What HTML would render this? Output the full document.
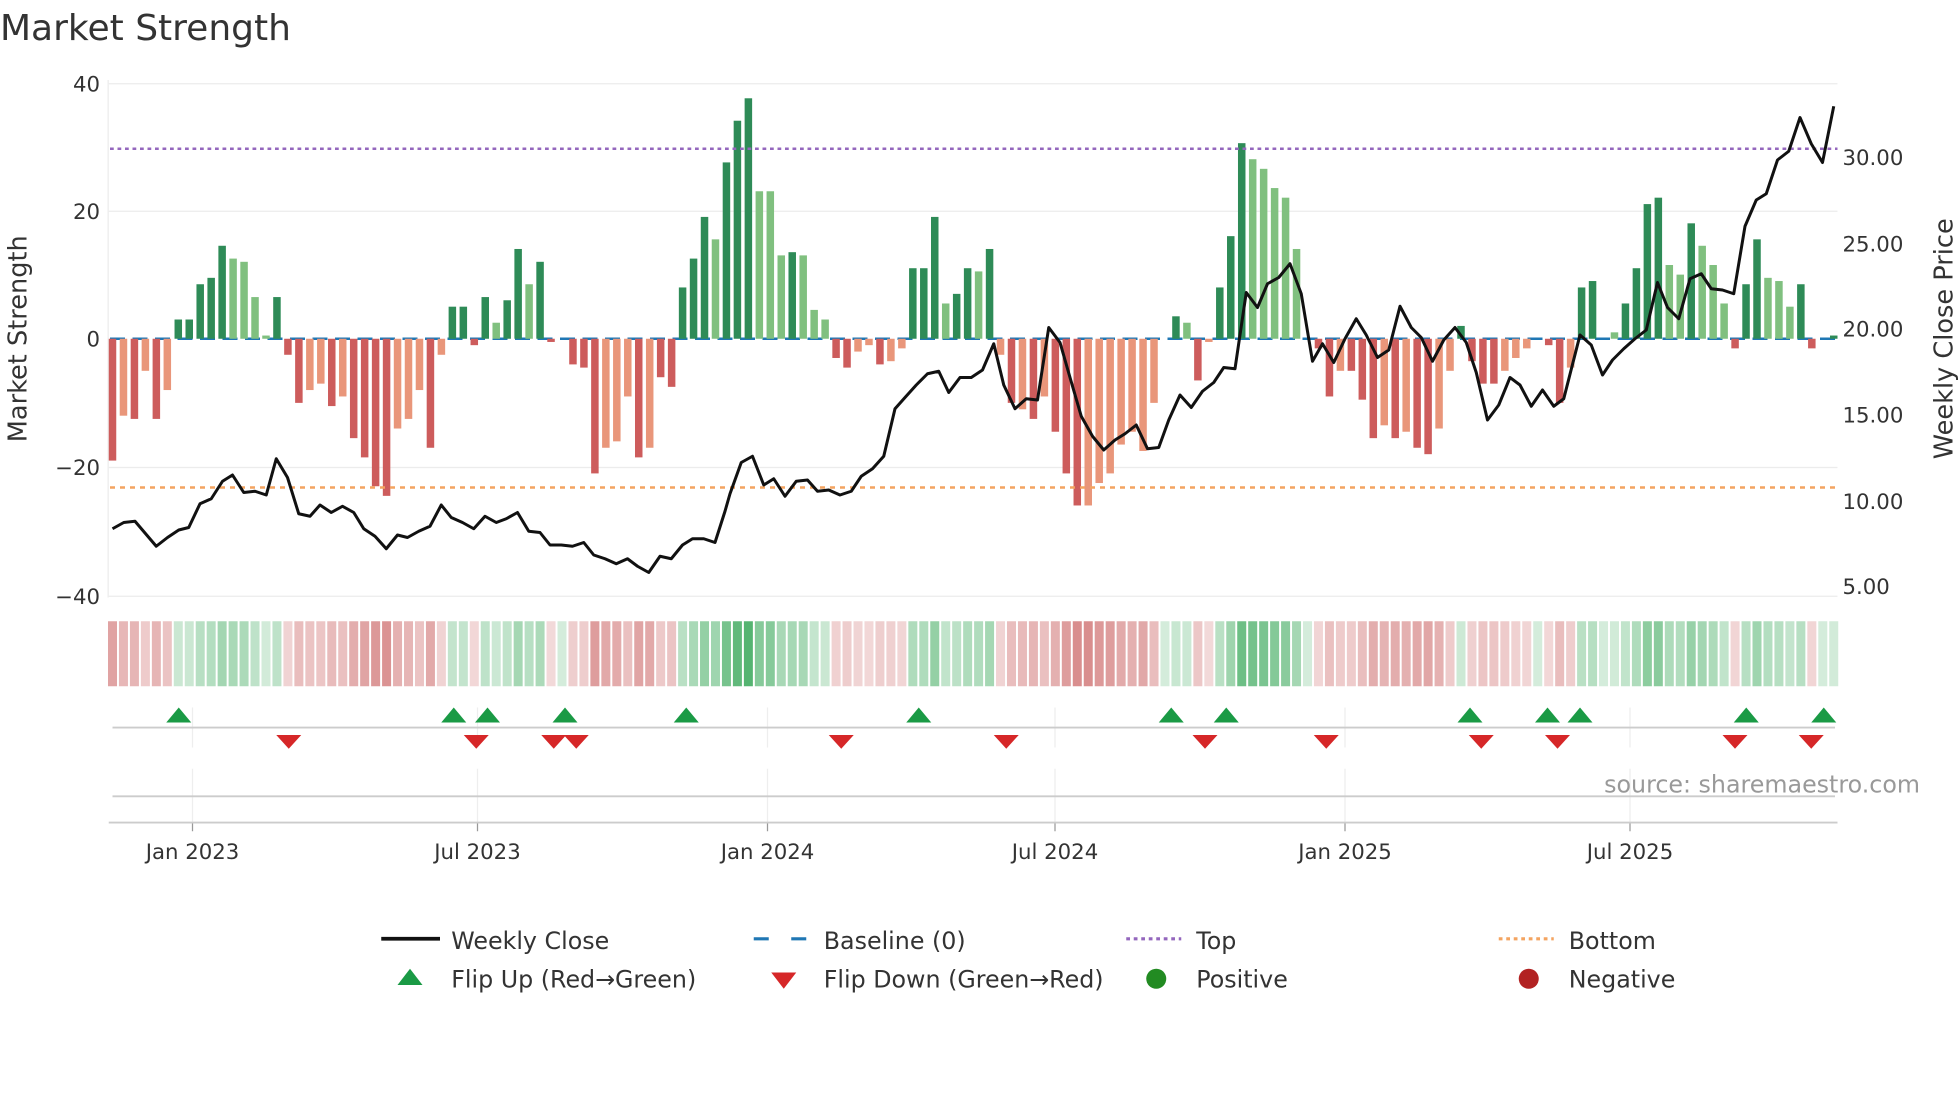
<!DOCTYPE html>
<html><head><meta charset="utf-8">
<style>
html,body{margin:0;padding:0;background:#fff;width:1960px;height:1102px;overflow:hidden}
svg{display:block;font-family:"DejaVu Sans","Liberation Sans",sans-serif}
</style></head><body>
<svg id="s" width="1960" height="1102" viewBox="0 0 1568 881.6" xmlns="http://www.w3.org/2000/svg">
<text x="0" y="32" font-size="28.8" fill="#333">Market Strength</text>
<g stroke="#ececec" stroke-width="1">
<line x1="87" y1="67" x2="1470" y2="67"/><line x1="87" y1="169" x2="1470" y2="169"/>
<line x1="87" y1="374" x2="1470" y2="374"/><line x1="87" y1="477" x2="1470" y2="477"/>
<line x1="86.5" y1="64" x2="86.5" y2="478"/>
</g>
<g font-size="17" fill="#333" text-anchor="end">
<text x="80" y="73">40</text><text x="80" y="175">20</text><text x="80" y="277">0</text>
<text x="80" y="380">−20</text><text x="80" y="483">−40</text>
</g>
<g font-size="17" fill="#333">
<text x="1474" y="132">30.00</text><text x="1474" y="201">25.00</text><text x="1474" y="269">20.00</text>
<text x="1474" y="338">15.00</text><text x="1474" y="407">10.00</text><text x="1474" y="475">5.00</text>
</g>
<text transform="translate(21,271) rotate(-90)" font-size="20.5" fill="#333" text-anchor="middle">Market Strength</text>
<text transform="translate(1562,271) rotate(-90)" font-size="20.5" fill="#333" text-anchor="middle">Weekly Close Price</text>
<line x1="88" y1="271" x2="1470" y2="271" stroke="#1f77b4" stroke-width="2" stroke-dasharray="12,6"/>
<g id="bars"></g>
<line x1="88" y1="119" x2="1470" y2="119" stroke="#9467bd" stroke-width="2" stroke-dasharray="3,3"/>
<line x1="88" y1="390" x2="1470" y2="390" stroke="#f4a460" stroke-width="2" stroke-dasharray="4,4"/>
<polyline id="price" fill="none" stroke="#111" stroke-width="2.4" stroke-linejoin="round"/>
<g id="heat"></g>
<g stroke="#eee" stroke-width="1" id="vg"></g>
<line x1="90" y1="582" x2="1468" y2="582" stroke="#ccc" stroke-width="1.5"/>
<line x1="90" y1="637" x2="1468" y2="637" stroke="#ccc" stroke-width="1.5"/>
<line x1="87" y1="658" x2="1470" y2="658" stroke="#ccc" stroke-width="1.5"/>
<g id="flips"></g>
<text x="1536" y="634" font-size="19" fill="#999" text-anchor="end">source: sharemaestro.com</text>
<g font-size="17" fill="#333" text-anchor="middle">
<text x="154" y="687">Jan 2023</text><text x="382" y="687">Jul 2023</text><text x="614" y="687">Jan 2024</text>
<text x="844" y="687">Jul 2024</text><text x="1076" y="687">Jan 2025</text><text x="1304" y="687">Jul 2025</text>
</g>
<g font-size="19" fill="#333">
<line x1="305" y1="751" x2="352" y2="751" stroke="#111" stroke-width="3"/>
<text x="361" y="759">Weekly Close</text>
<line x1="603" y1="751" x2="645" y2="751" stroke="#1f77b4" stroke-width="2.5" stroke-dasharray="12,18"/>
<text x="659" y="759">Baseline (0)</text>
<line x1="901" y1="751" x2="945" y2="751" stroke="#9467bd" stroke-width="2.5" stroke-dasharray="3,3"/>
<text x="957" y="759">Top</text>
<line x1="1199" y1="751" x2="1243" y2="751" stroke="#f4a460" stroke-width="2.5" stroke-dasharray="3,3"/>
<text x="1255" y="759">Bottom</text>
<polygon points="318,788 338,788 328,775" fill="#1a9a45"/>
<text x="361" y="790">Flip Up (Red→Green)</text>
<polygon points="617,778 637,778 627,791" fill="#d62728"/>
<text x="659" y="790">Flip Down (Green→Red)</text>
<circle cx="925" cy="783" r="8" fill="#228b22"/>
<text x="957" y="790">Positive</text>
<circle cx="1223" cy="783" r="8" fill="#b22222"/>
<text x="1255" y="790">Negative</text>
</g>
</svg>
<script>
var V=[[-19,1],[-12,0],[-12.5,1],[-5,0],[-12.5,1],[-8,0],[3,1],[3,1],[8.5,1],[9.5,1],[14.5,1],[12.5,0],[12,0],[6.5,0],[0.5,0],[6.5,1],
[-2.5,1],[-10,1],[-8,0],[-7,0],[-10.5,1],[-9,0],[-15.5,1],[-18.5,1],[-23,1],[-24.5,1],[-14,0],[-12.5,0],[-8,0],[-17,1],[-2.5,0],
[5,1],[5,1],[-1,1],[6.5,1],[2.5,0],[6,1],[14,1],[8.5,0],[12,1],[-0.5,1],[0,1],
[-4,1],[-4.5,1],[-21,1],[-17,0],[-16,0],[-9,0],[-18.5,1],[-17,0],[-6,1],[-7.5,1],
[8,1],[12.5,1],[19,1],[15.5,0],[27.5,1],[34,1],[37.5,1],[23,0],[23,0],[13,0],[13.5,1],[13,0],[4.5,0],[3,0],
[-3,1],[-4.5,1],[-2,0],[-1,0],[-4,1],[-3.5,0],[-1.5,0],
[11,1],[11,1],[19,1],[5.5,0],[7,1],[11,1],[10.5,0],[14,1],
[-2.5,0],[-10,1],[-11,0],[-12.5,1],[-9,0],[-14.5,1],[-21,1],[-26,1],[-26,0],[-22.5,0],[-21,0],[-16.5,0],[-14.5,0],[-17.5,0],[-10,0],[0,0],
[3.5,1],[2.5,0],[-6.5,1],[-0.5,0],
[8,1],[16,1],[30.5,1],[28,0],[26.5,0],[23.5,0],[22,0],[14,0],[0,0],
[-1.5,1],[-9,1],[-5,0],[-5,1],[-9.5,1],[-15.5,1],[-13.5,0],[-15.5,1],[-14.5,0],[-17,1],[-18,1],[-14,0],[-5,0],
[2,1],[-3.5,1],[-7,1],[-7,1],[-5,0],[-3,0],[-1.5,0],[0,0],[-1,1],[-10,1],[-4.5,0],
[8,1],[9,1],[0,1],[1,0],[5.5,1],[11,1],[21,1],[22,1],[11.5,0],[10,0],[18,1],[14.5,0],[11.5,0],[5.5,0],
[-1.5,1],[8.5,1],[15.5,1],[9.5,0],[9,0],[5,0],[8.5,1],[-1.5,1],[0,0],[0.5,1]];
var n=V.length,x0=90,x1=1467,dx=(x1-x0)/(n-1),ns="http://www.w3.org/2000/svg";
function el(t,a,p){var e=document.createElementNS(ns,t);for(var k in a)e.setAttribute(k,a[k]);p.appendChild(e);return e;}
var B=document.getElementById('bars'),H=document.getElementById('heat');
V.forEach(function(v,i){var x=x0+i*dx,val=v[0],h=Math.abs(val)*5.13;
var c=val>=0?(v[1]?'#2e8b57':'#80c07f'):(v[1]?'#cd5c5c':'#e9967a');
if(h>0.3)el('rect',{x:x-3,y:val>=0?271-h:271,width:6,height:h,fill:c},B);
var a=0.22+Math.min(Math.abs(val),38)/38*0.65;
el('rect',{x:x-3.6,y:497,width:7.2,height:52,fill:val>=0?'#3aa85a':'#c65656','fill-opacity':a},H);
});
var P="90,423 99,418 108,417 125,437 134,430 143,424 151,422 160,403 169,399 178,385 186,380 195,394 204,393 213,396 221,367 230,382 239,411 248,413 256,404 265,410 274,405 283,410 291,423 300,429 309,439 318,428 326,430 335,425 344,421 353,404 361,414 370,418 379,423 388,413 397,418 405,415 414,410 423,425 432,426 440,436 449,436 458,437 467,434 475,444 484,447 493,451 502,447 510,453 519,458 528,445 537,447 546,436 554,431 563,431 572,434 580,409 584,395 593,370 602,365 611,388 619,383 628,397 637,385 646,384 654,393 663,392 672,396 681,393 689,381 698,375 707,365 716,327 724,318 733,308 742,299 751,297 759,314 768,302 777,302 786,296 795,275 803,308 812,327 821,319 830,320 839,262 848,274 856,302 865,333 874,349 883,360 892,352 900,347 909,340 918,359 927,358 935,336 944,316 953,326 962,313 971,306 979,294 988,295 997,234 1006,246 1014,227 1023,222 1032,211 1041,235 1050,289 1058,275 1067,290 1076,271 1085,255 1093,268 1102,286 1111,280 1120,245 1129,262 1137,270 1146,289 1155,272 1164,262 1173,274 1181,298 1190,336 1199,324 1208,302 1216,308 1225,325 1234,312 1243,325 1251,319 1264,268 1273,276 1282,300 1290,288 1299,279 1308,271 1317,264 1326,226 1334,246 1343,255 1352,223 1361,219 1369,231 1378,232 1387,235 1396,181 1405,160 1413,155 1422,128 1431,121 1440,94 1449,115 1458,130 1467,85";
document.getElementById('price').setAttribute('points',P);
var G=document.getElementById('vg');
[154,382,614,844,1076,1304].forEach(function(x){el('line',{x1:x,y1:566,x2:x,y2:598},G);el('line',{x1:x,y1:615,x2:x,y2:658},G);el('line',{x1:x,y1:658,x2:x,y2:665,stroke:'#999'},G);});
var F=document.getElementById('flips');
[143,363,390,452,549,735,937,981,1176,1238,1264,1397,1459].forEach(function(x){el('polygon',{points:(x-10)+',578 '+(x+10)+',578 '+x+',566',fill:'#1a9a45'},F);});
[231,381,443,461,673,805,964,1061,1185,1246,1388,1449].forEach(function(x){el('polygon',{points:(x-10)+',588 '+(x+10)+',588 '+x+',599',fill:'#d62728'},F);});
</script>
</body></html>
